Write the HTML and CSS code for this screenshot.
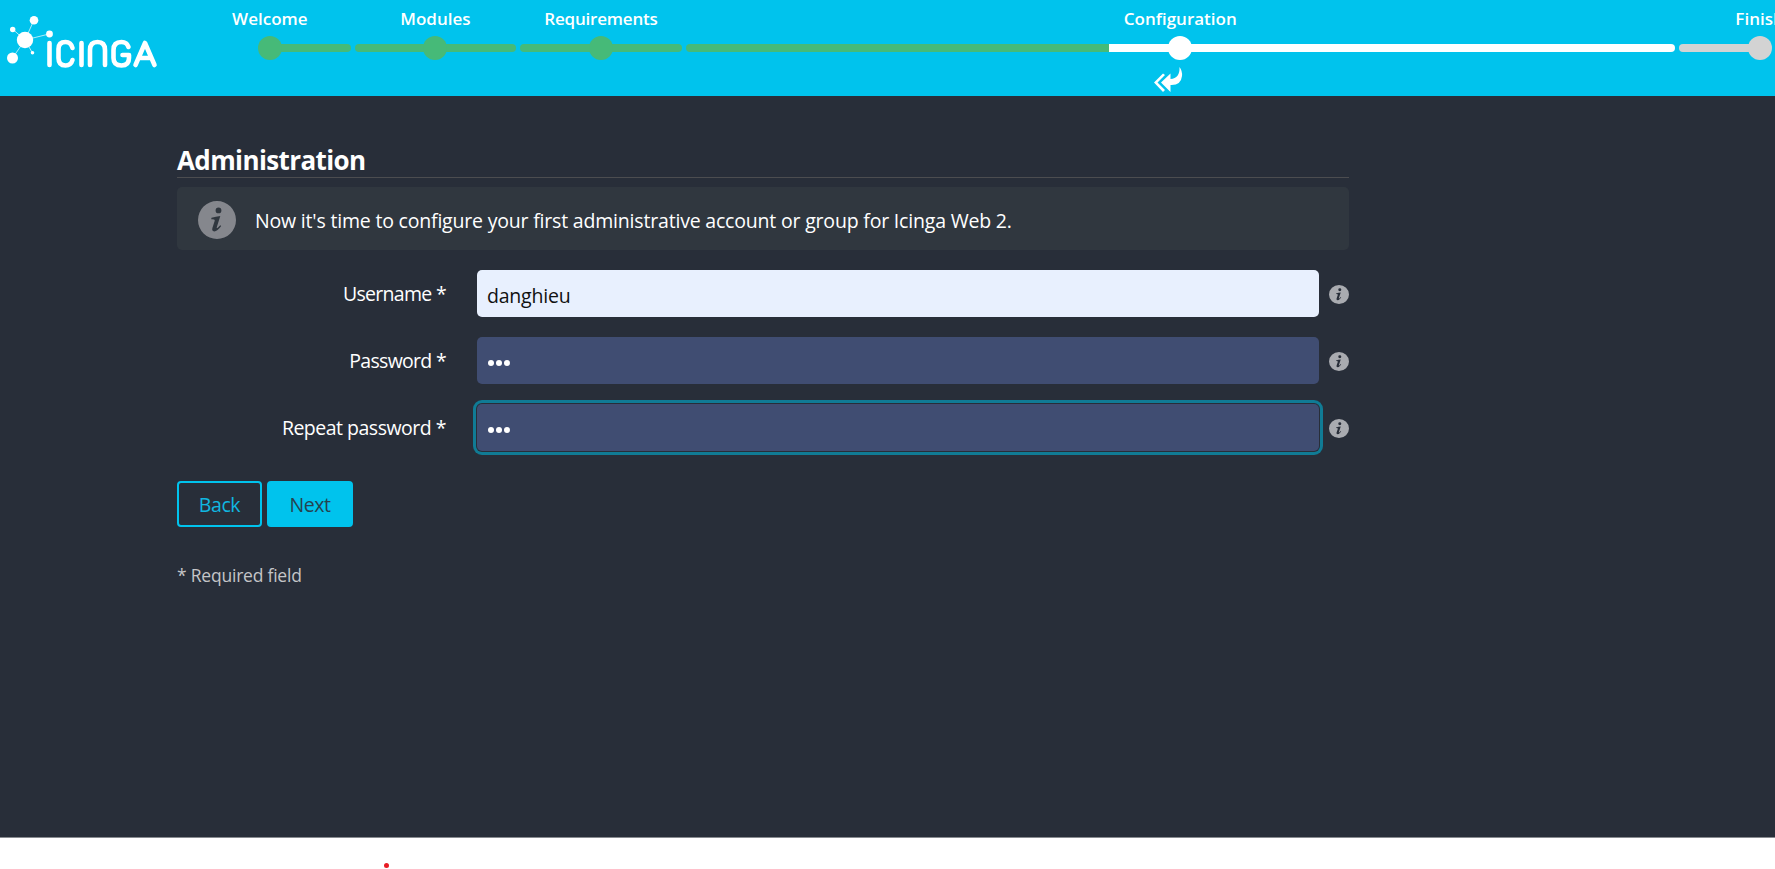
FILE: index.html
```
<!DOCTYPE html>
<html lang="en">
<head>
<meta charset="utf-8">
<title>Icinga Web 2 Setup</title>
<link rel="stylesheet" href="styles.css">
</head>
<body>
<svg class="defs" width="0" height="0">
  <symbol id="info" viewBox="0 0 38 38">
    <path fill-rule="evenodd" d="M19 0a19 19 0 1 0 0 38a19 19 0 1 0 0-38ZM20.5 6.5a2.9 2.9 0 1 1 0 5.8a2.9 2.9 0 1 1 0-5.8ZM13.5 16.8Q18 15.7 22.3 15.1L18.7 26.4Q18.7 27.7 20 26.6L22.3 24.2L23.2 25Q19.4 30.4 16.2 30.4Q13.6 30.2 14.4 27L16.8 19.4Q17 18 13.2 18.2Z"/>
  </symbol>
</svg>
<header class="header">
  <svg class="logo" viewBox="0 0 160 96">
    <path class="links" d="M25 40L34 20M25 40L13 29.500M25 40L49 34M25 40L12.500 58M25 40L32.500 53"/>
    <g class="nodes"><circle cx="25" cy="40" r="8.200"/><circle cx="34" cy="20.300" r="4.300"/><circle cx="12.700" cy="29.500" r="2.700"/><circle cx="49.500" cy="34" r="3.400"/><circle cx="12.500" cy="58" r="5.500"/><circle cx="32.500" cy="52.700" r="1.800"/></g>
    <path class="word" d="M49.500 43V65M72.500 48Q71 42 65.500 42Q58.500 42 58.500 49V58Q58.500 65.500 65.500 65.500Q71 65.500 72.500 60M81.500 43V65M90 65V50Q90 42 97.500 42Q105 42 105 50V65M128.500 47Q127 42 121.500 42Q113.500 42 113.500 50V58Q113.500 65.500 121.500 65.500Q129 65.500 129 58V55H122.500M135.500 65L145 43L154.500 65M139.500 58H150"/>
  </svg>
  <ol class="steps">
    <li class="step first done"><span class="label">Welcome</span><span class="track"><i class="dot"></i></span></li>
    <li class="step done"><span class="label">Modules</span><span class="track"><i class="dot"></i></span></li>
    <li class="step done"><span class="label tight">Requirements</span><span class="track"><i class="dot"></i></span></li>
    <li class="step current"><span class="label">Configuration</span><span class="track"><i class="dot"></i></span>
      <svg class="reply" viewBox="0 0 30 26"><path d="M26.500 0Q29.500 4 29 9Q28 18.500 17.500 18V25L8 15.500L17.500 6.500V12Q27 11.500 26.500 0ZM10 6.500L12 8L4.500 15.500L12 23L10 25L1 15.500Z"/></svg></li>
    <li class="step last"><span class="label">Finish</span><span class="track"><i class="dot"></i></span></li>
  </ol>
</header>
<main class="page">
  <form class="content">
    <h2 class="title">Administration</h2>
    <div class="notice"><svg class="notice-icon"><use href="#info"/></svg><span class="notice-text">Now it's time to configure your first administrative account or group for Icinga Web 2.</span></div>
    <div class="row"><label>Username *</label><div class="field filled">danghieu</div><svg class="hint" viewBox="0 0 38 38" preserveAspectRatio="none"><use href="#info"/></svg></div>
    <div class="row"><label>Password *</label><div class="field"><i></i><i></i><i></i></div><svg class="hint" viewBox="0 0 38 38" preserveAspectRatio="none"><use href="#info"/></svg></div>
    <div class="row"><label class="long">Repeat password *</label><div class="field focused"><i></i><i></i><i></i></div><svg class="hint" viewBox="0 0 38 38" preserveAspectRatio="none"><use href="#info"/></svg></div>
    <div class="buttons"><button type="button" class="btn">Back</button><button type="button" class="btn primary">Next</button></div>
    <p class="required">* Required field</p>
  </form>
</main>
<footer class="bottom"><i class="mark"></i></footer>
</body>
</html>
```
FILE: styles.css
```
* { box-sizing: border-box; }
body { margin: 0; height: 869px; overflow: hidden; display: flex; flex-direction: column; background: #fff; color: #fff; font-family: "Open Sans", "Noto Sans", sans-serif; }
.defs { position: absolute; }
.header { flex: none; height: 96px; display: flex; background: #00c3ed; overflow: hidden; }
.logo { flex: none; width: 160px; height: 96px; }
.links { stroke: #d9f6fd; stroke-width: .8; }
.nodes { fill: #fff; }
.word { fill: none; stroke: #fff; stroke-width: 4.6; stroke-linecap: round; stroke-linejoin: round; }
.steps { flex: none; display: flex; gap: 4px; margin: 0; padding: 0 0 0 29px; list-style: none; }
.step { flex: none; width: 161.6px; display: flex; flex-direction: column; align-items: center; padding-top: 7px; color: #d3d3d3; }
.step.done { color: #46ba78; }
.step.current { width: 989px; color: #fff; }
.label { height: 37px; line-height: 24px; font-size: 17px; font-weight: 600; white-space: nowrap; color: #fff; }
.tight { letter-spacing: -.2px; }
.track { width: 100%; height: 8px; display: flex; align-items: center; justify-content: center; border-radius: 4px; background: currentColor; }
.first .track { background: linear-gradient(90deg, transparent 50%, currentColor 50%); }
.last .track { background: linear-gradient(90deg, currentColor 50%, transparent 50%); }
.current .track { background: linear-gradient(90deg, #46ba78 423px, #fff 423px); }
.dot { flex: none; width: 24px; height: 24px; border-radius: 50%; background: currentColor; }
.reply { width: 30px; height: 26px; margin: 15px 24px 0 0; fill: #fff; }
.page { flex: none; height: 742px; padding: 48px 0 0 177px; background: #282e39; border-bottom: 1px solid #888b90; }
.content { width: 1172px; }
.title { margin: 0 0 9px; height: 34px; line-height: 33px; font-size: 26px; letter-spacing: -.6px; border-bottom: 1px solid #4c4d50; }
.notice { height: 63px; display: flex; align-items: center; gap: 19px; padding: 3px 0 0 21px; border-radius: 5px; background: #30373f; font-size: 19.5px; letter-spacing: -.19px; white-space: nowrap; margin-bottom: 20px; }
.notice-icon { width: 38px; height: 38px; fill: #85878d; }
.row { display: flex; align-items: center; height: 47px; margin-bottom: 20px; font-size: 19.5px; }
.row label { width: 269px; margin-right: 31px; text-align: right; white-space: nowrap; letter-spacing: -.7px; }
.row label.long { letter-spacing: -.5px; }
.field { width: 842px; height: 47px; display: flex; align-items: center; gap: 2px; padding: 4px 0 0 11px; border-radius: 5px; background: #404d72; }
.field i { width: 6px; height: 6px; border-radius: 50%; background: #fff; }
.filled { background: #e8f0fe; color: #111; padding: 3px 0 0 10px; letter-spacing: -.2px; }
.focused { box-shadow: 0 0 0 1px #282e39, 0 0 0 4px #107b95; }
.hint { width: 20px; height: 19px; margin: 1px 0 0 10px; fill: #a9abb0; }
.buttons { display: flex; gap: 5px; margin-top: 30px; }
.btn { width: 85px; height: 46px; padding: 1px 0 0; border: 2px solid #00c3ed; border-radius: 4px; background: none; color: #10b7e0; font: 19.5px "Open Sans", sans-serif; letter-spacing: -.4px; }
.btn.primary { width: 86px; background: #00c3ed; color: #25424f; }
.required { margin: 34px 0 0; font-size: 17.5px; line-height: 28px; letter-spacing: -.22px; color: #c4c5c8; }
.bottom { flex: none; height: 31px; padding: 25px 0 0 384px; }
.mark { display: block; width: 5px; height: 5px; border-radius: 50%; background: #e81c24; }
```
